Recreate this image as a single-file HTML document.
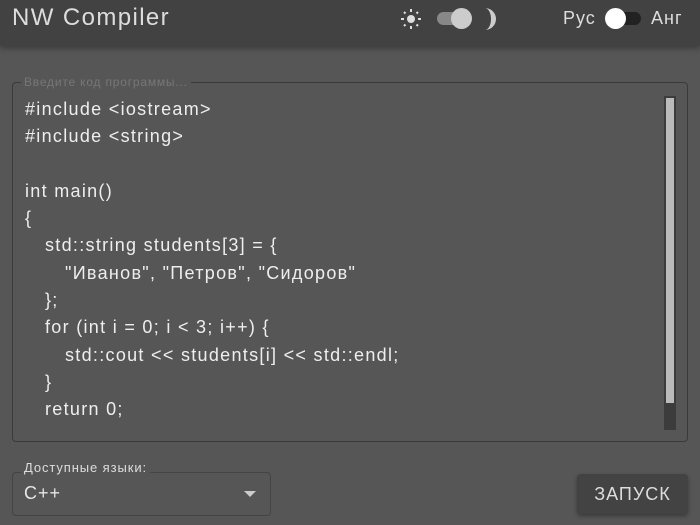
<!DOCTYPE html><html><head><meta charset="utf-8"><style>
body{margin:0;width:700px;height:525px;background:#565656;font-family:"Liberation Sans",sans-serif;color:#e6e6e6;overflow:hidden;position:relative}
.hdr{position:absolute;left:0;top:0;width:700px;height:46px;background:#424242;box-shadow:0 2px 6px rgba(0,0,0,.35)}
.title{position:absolute;left:12px;top:4px;font-size:24px;letter-spacing:1.4px;color:#ddd}
.box{position:absolute;left:12px;top:82px;width:674px;height:358px;border:1px solid #3a3a3a;border-radius:4px}
.leg{position:absolute;left:21px;top:75px;background:#565656;padding:0 3px;font-size:12px;letter-spacing:.8px;color:#777}
.code{position:absolute;left:25px;top:96px;font-size:18px;line-height:27.3px;letter-spacing:1.3px;color:#eee}
.code div{height:27.3px;white-space:nowrap}
.i1{padding-left:20px}.i2{padding-left:40px}
.sb{position:absolute;left:664px;top:96px;width:12px;height:334px;background:#3c3c3c}
.th{position:absolute;left:666px;top:98px;width:8px;height:305px;background:#bbb}
.sel{position:absolute;left:12px;top:472px;width:257px;height:42px;border:1px solid #444;border-radius:4px}
.sl{position:absolute;left:21px;top:460px;background:#565656;padding:0 3px;font-size:13px;letter-spacing:.9px;color:#ddd}
.btn{position:absolute;left:577px;top:474px;width:111px;height:40px;background:#434343;border-radius:4px;box-shadow:0 2px 4px rgba(0,0,0,.35);font-size:18px;letter-spacing:1px;text-align:center;line-height:40px;color:#ddd}
</style></head><body>
<div class="hdr">
<div class="title">NW Compiler</div>
<svg style="position:absolute;left:398px;top:6px" width="26" height="26" viewBox="0 0 26 26"><circle cx="13" cy="13" r="4" fill="#ddd"/><g stroke="#ddd" stroke-width="2"><line x1="13" y1="3" x2="13" y2="6"/><line x1="13" y1="20" x2="13" y2="23"/><line x1="3" y1="13" x2="6" y2="13"/><line x1="20" y1="13" x2="23" y2="13"/><line x1="6" y1="6" x2="7.5" y2="7.5"/><line x1="18.5" y1="18.5" x2="20" y2="20"/><line x1="6" y1="20" x2="7.5" y2="18.5"/><line x1="18.5" y1="7.5" x2="20" y2="6"/></g></svg>
<div style="position:absolute;left:437px;top:12px;width:34px;height:13px;border-radius:7px;background:#888"></div>
<div style="position:absolute;left:451px;top:8px;width:21px;height:21px;border-radius:50%;background:#ccc"></div>
<svg style="position:absolute;left:482px;top:6px" width="22" height="26" viewBox="0 0 22 26"><path d="M3 2 A11 11 0 0 1 3 24 A6 11 0 0 0 3 2Z" fill="#ccc"/></svg>
<div style="position:absolute;left:563px;top:8px;font-size:18px;letter-spacing:1px;color:#ddd">Рус</div>
<div style="position:absolute;left:607px;top:12px;width:34px;height:13px;border-radius:7px;background:#222"></div>
<div style="position:absolute;left:605px;top:8px;width:21px;height:21px;border-radius:50%;background:#fff"></div>
<div style="position:absolute;left:651px;top:8px;font-size:18px;letter-spacing:1px;color:#ddd">Анг</div>
</div>
<div class="box"></div><div class="leg">Введите код программы...</div>
<div class="code">
<div>#include &lt;iostream&gt;</div>
<div>#include &lt;string&gt;</div>
<div></div>
<div>int main()</div>
<div>{</div>
<div class="i1">std::string students[3] = {</div>
<div class="i2">"Иванов", "Петров", "Сидоров"</div>
<div class="i1">};</div>
<div class="i1">for (int i = 0; i &lt; 3; i++) {</div>
<div class="i2">std::cout &lt;&lt; students[i] &lt;&lt; std::endl;</div>
<div class="i1">}</div>
<div class="i1">return 0;</div>
</div>
<div class="sb"></div><div class="th"></div>
<div class="sel"></div><div class="sl">Доступные языки:</div>
<div style="position:absolute;left:24px;top:483px;font-size:18px;letter-spacing:1px">C++</div>
<div style="position:absolute;left:244px;top:491px;width:0;height:0;border-left:6px solid transparent;border-right:6px solid transparent;border-top:6px solid #ccc"></div>
<div class="btn">ЗАПУСК</div>
</body></html>
